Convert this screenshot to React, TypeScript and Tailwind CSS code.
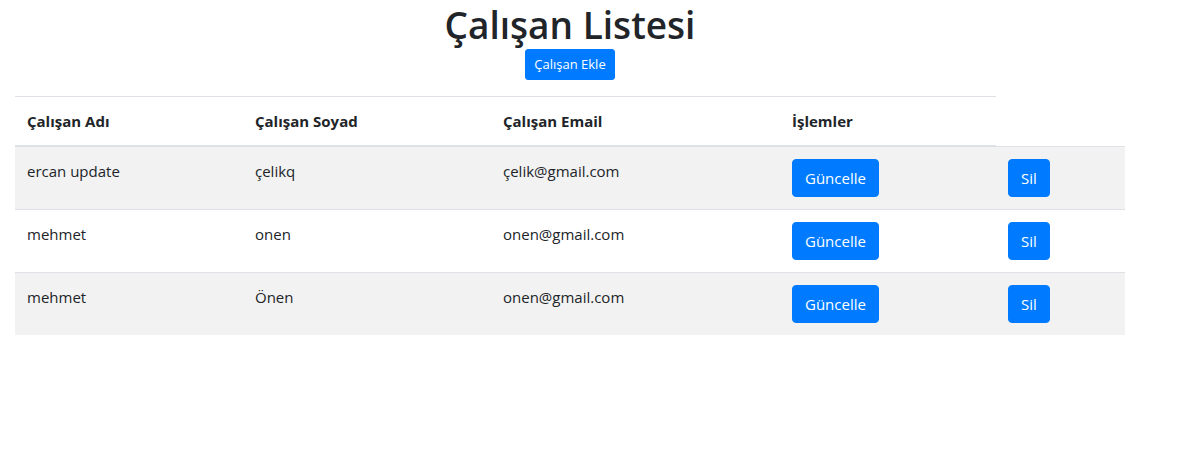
const employees = [
  { id: 1, firstName: 'ercan update', lastName: 'çelikq', email: 'çelik@gmail.com' },
  { id: 2, firstName: 'mehmet', lastName: 'onen', email: 'onen@gmail.com' },
  { id: 3, firstName: 'mehmet', lastName: 'Önen', email: 'onen@gmail.com' },
];

export default function App() {
  return (
    <div className="min-h-[474px] bg-white text-[#212529] font-['Open_Sans',sans-serif]">
      <div className="ml-[15px] w-[1110px]">
        <h1 className="pt-px text-center text-[37px] leading-[47px] font-semibold">Çalışan Listesi</h1>
        <div className="flex justify-center mt-px">
          <button className="rounded-[3px] bg-[#007bff] px-2 py-1 text-[13px] leading-[21px] text-white border border-[#007bff]">
            Çalışan Ekle
          </button>
        </div>

        <table className="mt-4 border-collapse text-[15px] leading-6">
          <thead>
            <tr>
              <th className="w-[228px] border-t border-b-2 border-[#dee2e6] p-3 text-left font-bold">Çalışan Adı</th>
              <th className="w-[248px] border-t border-b-2 border-[#dee2e6] p-3 text-left font-bold">Çalışan Soyad</th>
              <th className="w-[289px] border-t border-b-2 border-[#dee2e6] p-3 text-left font-bold">Çalışan Email</th>
              <th className="w-[216px] border-t border-b-2 border-[#dee2e6] p-3 text-left font-bold">İşlemler</th>
            </tr>
          </thead>
          <tbody>
            {employees.map((emp, i) => (
              <tr key={emp.id} className={i % 2 === 0 ? 'bg-[#f2f2f2]' : ''}>
                <td className="border-t border-[#dee2e6] p-3 align-top">{emp.firstName}</td>
                <td className="border-t border-[#dee2e6] p-3 align-top">{emp.lastName}</td>
                <td className="border-t border-[#dee2e6] p-3 align-top">{emp.email}</td>
                <td className="border-t border-[#dee2e6] p-3 align-top">
                  <button className="rounded border border-[#007bff] bg-[#007bff] px-3 py-1.5 text-white">Güncelle</button>
                </td>
                <td className="w-[129px] border-t border-[#dee2e6] p-3 align-top">
                  <button className="rounded border border-[#007bff] bg-[#007bff] px-3 py-1.5 text-white">Sil</button>
                </td>
              </tr>
            ))}
          </tbody>
        </table>
      </div>
    </div>
  );
}
